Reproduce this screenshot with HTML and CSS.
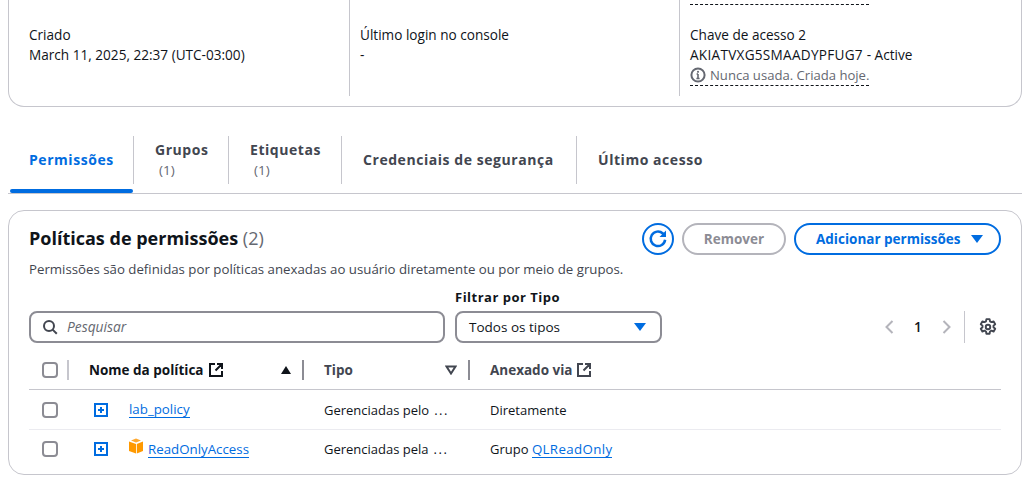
FILE: index.html
```html
<!DOCTYPE html>
<html lang="pt-BR">
<head>
<meta charset="utf-8">
<title>Usuário</title>
<link rel="stylesheet" href="styles.css">
</head>
<body>
<div class="page">
  <section class="summary">
    <div class="col col-first">
      <div class="kv"><div>Criado</div><div>March 11, 2025, 22:37 (UTC-03:00)</div></div>
    </div>
    <div class="col col-second">
      <div class="kv"><div>Último login no console</div><div>-</div></div>
    </div>
    <div class="col col-third">
      <div class="dash-top"></div>
      <div class="kv">
        <div>Chave de acesso 2</div>
        <div class="key">AKIATVXG5SMAADYPFUG7 <span>- Active</span></div>
        <div class="note">
          <svg class="info" viewBox="0 0 16 16" width="16" height="16" aria-hidden="true"><circle cx="8" cy="8" r="6.6" fill="none" stroke="#656871" stroke-width="2"/><path d="M8 7v4.5M6.4 11.5h3.2M6.6 7H8" fill="none" stroke="#656871" stroke-width="1.6"/><rect x="7.1" y="3.9" width="1.8" height="1.8" fill="#656871"/></svg>
          <span>Nunca usada. Criada hoje.</span>
        </div>
      </div>
    </div>
  </section>

  <nav class="tabs">
    <a class="tab tab-active">Permissões</a>
    <a class="tab">Grupos<small>(1)</small></a>
    <a class="tab">Etiquetas<small>(1)</small></a>
    <a class="tab">Credenciais de segurança</a>
    <a class="tab tab-last">Último acesso</a>
  </nav>

  <section class="panel">
    <header class="panel-head">
      <h2>Políticas de permissões <span>(2)</span></h2>
      <div class="actions">
        <button class="btn btn-icon" aria-label="Atualizar">
          <svg viewBox="0 0 16 16" width="20" height="20" aria-hidden="true"><path d="M13.7 8.6A5.8 5.8 0 1 1 11.9 3.6L13.4 5" fill="none" stroke="#006ce0" stroke-width="2"/><path d="M14.4 1.2v5.2H9.2z" fill="#006ce0"/></svg>
        </button>
        <button class="btn btn-disabled">Remover</button>
        <button class="btn btn-primary">Adicionar permissões<i class="caret"></i></button>
      </div>
    </header>
    <p class="desc">Permissões são definidas por políticas anexadas ao usuário diretamente ou por meio de grupos.</p>

    <div class="filters">
      <div class="search">
        <svg viewBox="0 0 16 16" width="16" height="16" aria-hidden="true"><circle cx="7" cy="7" r="5" fill="none" stroke="#424650" stroke-width="2"/><path d="M10.6 10.6l4.2 4.2" stroke="#424650" stroke-width="2"/></svg>
        <span>Pesquisar</span>
      </div>
      <div class="filter">
        <label>Filtrar por Tipo</label>
        <div class="select">Todos os tipos<i class="caret"></i></div>
      </div>
      <div class="pager">
        <svg viewBox="0 0 16 16" width="16" height="16" aria-hidden="true"><path d="M10.5 2L4.500 8l6 6" fill="none" stroke="#b4b4bb" stroke-width="2"/></svg>
        <b>1</b>
        <svg viewBox="0 0 16 16" width="16" height="16" aria-hidden="true"><path d="M5.500 2l6 6-6 6" fill="none" stroke="#b4b4bb" stroke-width="2"/></svg>
        <span class="pager-sep"></span>
        <svg class="gear" viewBox="0 0 16 16" width="18" height="18" aria-hidden="true"><path d="M6.6 1h2.8l.4 2 1.3.7 1.9-.7 1.4 2.5-1.5 1.3v1.4l1.5 1.3-1.4 2.5-1.9-.7-1.3.7-.4 2H6.6l-.4-2-1.3-.7-1.9.7-1.4-2.5 1.5-1.3V6.800L1.600 5.500 3 3l1.900.7 1.300-.7z" fill="none" stroke="#424650" stroke-width="1.700" stroke-linejoin="round"/><circle cx="8" cy="8" r="2" fill="none" stroke="#424650" stroke-width="1.700"/></svg>
      </div>
    </div>

    <div class="table">
      <div class="row row-head">
        <div class="cell"><span class="check"></span><span class="sep sep-light"></span></div>
        <div class="cell cell-name">
          <span class="th-dark">Nome da política</span>
          <svg class="ext" viewBox="0 0 16 16" width="16" height="16" aria-hidden="true"><path d="M7 2H2v12h12V9M9 2h5v5M14 2L7.500 8.500" fill="none" stroke="#0f141a" stroke-width="2"/></svg>
          <i class="sort sort-up"></i><span class="sep"></span>
        </div>
        <div class="cell cell-type">
          <span>Tipo</span>
          <svg class="sort-down" viewBox="0 0 12 10" width="12" height="10" aria-hidden="true"><path d="M1.500 1.500h9L6 8.500z" fill="none" stroke="#424650" stroke-width="2"/></svg>
          <span class="sep"></span>
        </div>
        <div class="cell cell-via">
          <span>Anexado via</span>
          <svg class="ext" viewBox="0 0 16 16" width="16" height="16" aria-hidden="true"><path d="M7 2H2v12h12V9M9 2h5v5M14 2L7.500 8.500" fill="none" stroke="#424650" stroke-width="2"/></svg>
        </div>
      </div>
      <div class="row">
        <div class="cell"><span class="check"></span></div>
        <div class="cell cell-pol">
          <svg class="plus" viewBox="0 0 14 14" width="14" height="14" aria-hidden="true"><path fill-rule="evenodd" fill="#006ce0" d="M0 0h14v14H0zM2 2v10h10V2z"/><path d="M7 4v6M4 7h6" stroke="#006ce0" stroke-width="2"/></svg>
          <a class="link">lab_policy</a>
        </div>
        <div class="cell cell-val">Gerenciadas pelo<span class="dots">...</span></div>
        <div class="cell cell-val">Diretamente</div>
      </div>
      <div class="row row-last">
        <div class="cell"><span class="check"></span></div>
        <div class="cell cell-pol">
          <svg class="plus" viewBox="0 0 14 14" width="14" height="14" aria-hidden="true"><path fill-rule="evenodd" fill="#006ce0" d="M0 0h14v14H0zM2 2v10h10V2z"/><path d="M7 4v6M4 7h6" stroke="#006ce0" stroke-width="2"/></svg>
          <svg class="box" viewBox="0 0 16 16" width="16" height="16" aria-hidden="true"><path d="M1 3.600L8 6v9.500L1 13z" fill="#ff9900"/><path d="M15 3.600L8.800 6v9.500L15 13z" fill="#ff9900"/><path d="M3 2.400L8 .6l5 1.800-5 2z" fill="#ffa930"/></svg>
          <a class="link">ReadOnlyAccess</a>
        </div>
        <div class="cell cell-val">Gerenciadas pela<span class="dots">...</span></div>
        <div class="cell cell-val">Grupo&nbsp;<a class="link link-wide">QLReadOnly</a></div>
      </div>
    </div>
  </section>
</div>
</body>
</html>
```
FILE: styles.css
```css
* { box-sizing: border-box; }
html, body { margin: 0; padding: 0; background: #fff; height: 477px; overflow: hidden; }
body { font-family: "Open Sans", "Noto Sans", sans-serif; font-size: 13.6px; line-height: 20px; color: #0f141a; }
.page { padding: 0 7px 0 8px; }

.summary { display: flex; height: 107px; border: 1px solid #c6c6cd; border-top: 0; border-radius: 0 0 16px 16px; }
.col { height: 96px; position: relative; }
.col-first { width: 341px; padding: 25px 0 0 20px; border-right: 1px solid #c6c6cd; }
.col-second { width: 330px; padding: 25px 0 0 10px; border-right: 1px solid #c6c6cd; }
.col-third { flex: 1; padding: 25px 0 0 10px; }
.dash-top { position: absolute; top: 4px; left: 10px; width: 179px; border-top: 1px dashed #0f141a; }
.key { letter-spacing: .27px; }
.key span { letter-spacing: 0; }
.note { display: inline-flex; align-items: center; gap: 4px; color: #656871; font-size: 13.1px; border-bottom: 1px dashed #0f141a; height: 21px; }

.tabs { display: grid; grid-template-columns: 124px 95px 113px 235px 1fr; height: 87px; padding: 29px 0 0 2px; border-bottom: 1px solid #c6c6cd; }
.tab { height: 48px; padding-left: 21px; display: flex; flex-direction: column; justify-content: center; font-size: 14px; letter-spacing: .55px; font-weight: 700; color: #424650; border-right: 1px solid #c6c6cd; }
.tab small { font-size: 13.5px; letter-spacing: 0; font-weight: 400; padding-left: 4px; color: #656871; line-height: 20px; }
.tab-active { color: #006ce0; padding-left: 19px; position: relative; }
.tab-active::after { content: ""; position: absolute; left: 0; right: 0; top: 53px; height: 4px; background: #006ce0; border-radius: 2px; }
.tab-last { border-right: 0; }

.panel { margin-top: 16px; height: 265px; border: 1px solid #c6c6cd; border-radius: 16px; padding: 12px 20px 0 20px; }
.panel-head { display: flex; justify-content: space-between; align-items: center; height: 32px; }
h2 { margin: -3px 0 0; font-size: 18px; font-weight: 700; line-height: 26px; }
h2 span { font-weight: 400; color: #656871; }
.actions { display: flex; gap: 8px; }
.btn { height: 32px; border-radius: 16px; border: 2px solid #006ce0; background: #fff; font: 700 13.5px/20px "Open Sans", "Noto Sans", sans-serif; color: #006ce0; padding: 0; display: flex; align-items: center; justify-content: center; }
.btn-icon { width: 32px; }
.btn-disabled { width: 104px; border-color: #b4b4bb; color: #8c8c94; }
.btn-primary { width: 207px; gap: 10px; justify-content: flex-start; padding-left: 20px; }
.caret { display: inline-block; width: 0; height: 0; border-left: 6px solid transparent; border-right: 6px solid transparent; border-top: 8px solid #006ce0; }

.desc { margin: 4px 0 0; font-size: 13.25px; line-height: 20px; color: #424650; }

.filters { display: flex; align-items: flex-end; margin-top: 10px; height: 54px; }
.search { width: 416px; height: 32px; border: 2px solid #8c8c94; border-radius: 8px; display: flex; align-items: center; gap: 9px; padding-left: 11px; font-style: italic; font-size: 13.8px; color: #656871; }
.filter { margin-left: 10px; width: 207px; }
.filter label { display: block; font-weight: 700; font-size: 13px; letter-spacing: .5px; line-height: 20px; margin-bottom: 4px; }
.select { height: 32px; border: 2px solid #8c8c94; border-radius: 8px; display: flex; align-items: center; justify-content: space-between; padding: 0 14px 0 12px; font-size: 13.5px; }
.pager { flex: 1; display: flex; align-items: center; height: 32px; justify-content: flex-end; padding-right: 4px; }
.pager b { width: 40px; text-align: center; font-weight: 600; }
.pager-sep { width: 1px; height: 32px; background: #c6c6cd; margin: 0 14px 0 10px; }

.table { margin-top: 7px; }
.row { display: grid; grid-template-columns: 40px 235px 166px 1fr; height: 40px; border-bottom: 1px solid #ebebf0; align-items: center; }
.row-head { height: 40px; border-bottom: 1px solid #c6c6cd; font-weight: 700; font-size: 13.5px; color: #424650; }
.row-last { height: 38px; border-bottom: 0; }
.cell { display: flex; align-items: center; height: 100%; position: relative; white-space: nowrap; }
.check { width: 16px; height: 16px; margin-left: 13px; border: 2px solid #8c8c94; border-radius: 4px; }
.sep { position: absolute; right: 0; top: 10px; width: 2px; height: 20px; background: #8c8c94; }
.sep-light { background: #c6c6cd; }
.cell-name, .cell-type, .cell-via { padding-left: 20px; }
.th-dark { color: #0f141a; }
.ext { margin-left: 4px; }
.sort { position: absolute; right: 13px; }
.sort-up { width: 0; height: 0; border-left: 5.500px solid transparent; border-right: 5.500px solid transparent; border-bottom: 8px solid #0f141a; }
.sort-down { position: absolute; right: 13px; }
.cell-pol { padding-left: 25px; }
.plus { flex: none; margin-right: 21px; }
.box { flex: none; margin: -6px 4px 0 -1px; }
.link { color: #006ce0; border-bottom: 1px solid #006ce0; line-height: 16px; font-size: 13.3px; }
.link-wide { letter-spacing: .35px; }
.cell-val { padding-left: 20px; font-size: 13px; }
.dots { margin-left: 5px; letter-spacing: 1.5px; }
```
